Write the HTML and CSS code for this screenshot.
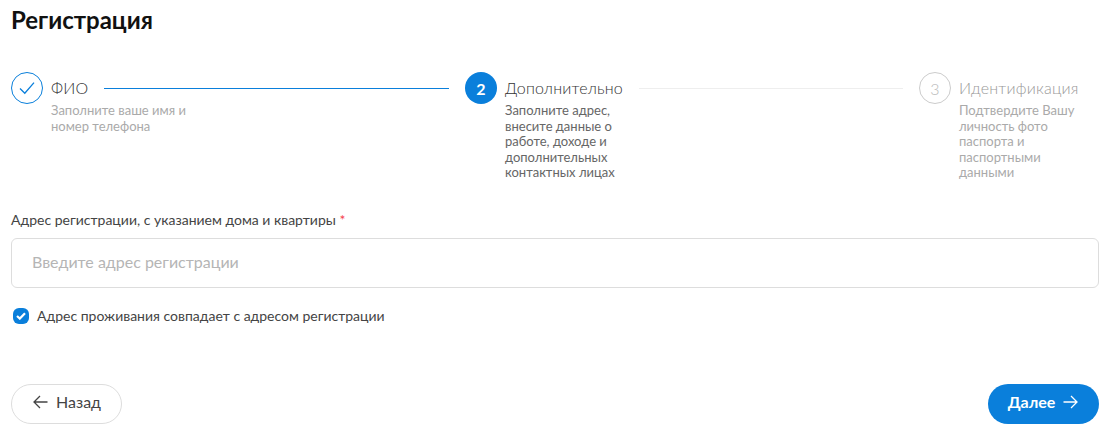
FILE: index.html
```html
<!DOCTYPE html>
<html lang="ru">
<head>
    <meta charset="UTF-8">
    <meta name="viewport" content="width=device-width, initial-scale=1.0">
    <title>Регистрация</title>
    <link rel="stylesheet" href="styles.css">
</head>
<body>
    <h1 class="page-title">Регистрация</h1>

    <div class="steps">
        <div class="step step-done">
            <div class="step-icon">
                <svg width="16" height="16" viewBox="0 0 16 16" fill="none" stroke="#0a7fdb" stroke-width="1.3"><path d="M1 8.5 L5.8 13.2 L15 2.6"/></svg>
            </div>
            <div class="step-body">
                <div class="step-head">
                    <span class="step-title">ФИО</span>
                    <span class="step-line"></span>
                </div>
                <div class="step-desc">Заполните ваше имя и номер телефона</div>
            </div>
        </div>
        <div class="step step-active">
            <div class="step-icon">2</div>
            <div class="step-body">
                <div class="step-head">
                    <span class="step-title">Дополнительно</span>
                    <span class="step-line"></span>
                </div>
                <div class="step-desc">Заполните адрес, внесите данные о работе, доходе и дополнительных контактных лицах</div>
            </div>
        </div>
        <div class="step step-wait">
            <div class="step-icon">3</div>
            <div class="step-body">
                <div class="step-head">
                    <span class="step-title">Идентификация</span>
                </div>
                <div class="step-desc">Подтвердите Вашу личность фото паспорта и паспортными данными</div>
            </div>
        </div>
    </div>

    <form class="form">
        <label class="field-label" for="address">Адрес регистрации, с указанием дома и квартиры <span class="required">*</span></label>
        <input class="field-input" id="address" type="text" placeholder="Введите адрес регистрации">

        <label class="check">
            <span class="check-box">
                <svg width="10" height="8" viewBox="0 0 10 8" fill="none" stroke="#fff" stroke-width="2.2"><path d="M1 4 L3.8 6.6 L9 1.2"/></svg>
            </span>
            Адрес проживания совпадает с адресом регистрации
        </label>

        <div class="actions">
            <button type="button" class="btn btn-back">
                <svg width="16" height="14" viewBox="0 0 16 14" fill="none" stroke="#444" stroke-width="1.3"><path d="M15.5 7 H2 M8 1 L2 7 L8 13"/></svg>
                Назад
            </button>
            <button type="button" class="btn btn-next">
                Далее
                <svg width="16" height="14" viewBox="0 0 16 14" fill="none" stroke="#fff" stroke-width="1.3"><path d="M0.5 7 H14 M8 1 L14 7 L8 13"/></svg>
            </button>
        </div>
    </form>
</body>
</html>
```

FILE: styles.css
```css
body {
    font-family: Lato, "Noto Sans", sans-serif;
    margin: 0;
    padding: 6px 13px 0 11px;
    color: #444;
    background-color: #fff;
}

.page-title {
    margin: 0;
    font-size: 24px;
    line-height: 28px;
    font-weight: 700;
    color: #111;
}

.steps {
    display: flex;
    gap: 16px;
    margin-top: 38px;
}

.step {
    flex: 1;
    display: flex;
    gap: 8px;
}

.step-wait {
    flex: none;
}

.step-icon {
    flex: none;
    width: 32px;
    height: 32px;
    box-sizing: border-box;
    border-radius: 50%;
    display: flex;
    align-items: center;
    justify-content: center;
    font-size: 16px;
}

.step-done .step-icon {
    border: 1px solid #0a7fdb;
}

.step-active .step-icon {
    background-color: #0a7fdb;
    color: #fff;
    font-weight: 700;
}

.step-wait .step-icon {
    border: 1px solid #ccc;
    color: #bbb;
    font-weight: 300;
}

.step-body {
    flex: 1;
}

.step-head {
    display: flex;
    align-items: center;
    gap: 16px;
    height: 32px;
}

.step-title {
    font-size: 16px;
    font-weight: 300;
    letter-spacing: 0.2px;
    margin-top: -2px;
    color: #333;
}

.step-wait .step-title {
    color: #999;
}

.step-line {
    flex: 1;
    height: 1px;
    background-color: #eee;
}

.step-done .step-line {
    background-color: #0a7fdb;
}

.step-desc {
    max-width: 140px;
    margin-top: -1px;
    font-size: 13px;
    line-height: 15.5px;
    color: #aaa;
}

.step-active .step-desc {
    color: #666;
}

.form {
    margin-top: 30px;
}

.field-label {
    display: block;
    font-size: 14px;
    line-height: 18px;
    color: #444;
}

.required {
    color: #f5424d;
}

.field-input {
    display: block;
    width: 100%;
    height: 50px;
    box-sizing: border-box;
    margin-top: 9px;
    padding: 0 20px 2px;
    border: 1px solid #ddd;
    border-radius: 6px;
    font-family: inherit;
    font-size: 16px;
    color: #444;
}

.field-input::placeholder {
    color: #b5b5b5;
}

.check {
    display: flex;
    align-items: center;
    gap: 8px;
    margin-top: 19px;
    padding-left: 2px;
    font-size: 14px;
    line-height: 18px;
}

.check-box {
    flex: none;
    width: 16px;
    height: 16px;
    border-radius: 6px;
    background-color: #0a7fdb;
    display: flex;
    align-items: center;
    justify-content: center;
}

.actions {
    display: flex;
    justify-content: space-between;
    margin-top: 59px;
}

.btn {
    display: flex;
    align-items: center;
    justify-content: center;
    gap: 8px;
    width: 111px;
    height: 40px;
    box-sizing: border-box;
    padding-bottom: 5px;
    border-radius: 20px;
    font-family: inherit;
    font-size: 16px;
}

.btn-back {
    background-color: #fff;
    border: 1px solid #ddd;
    color: #444;
}

.btn-next {
    background-color: #0a7fdb;
    border: none;
    color: #fff;
    font-weight: 700;
}
```
